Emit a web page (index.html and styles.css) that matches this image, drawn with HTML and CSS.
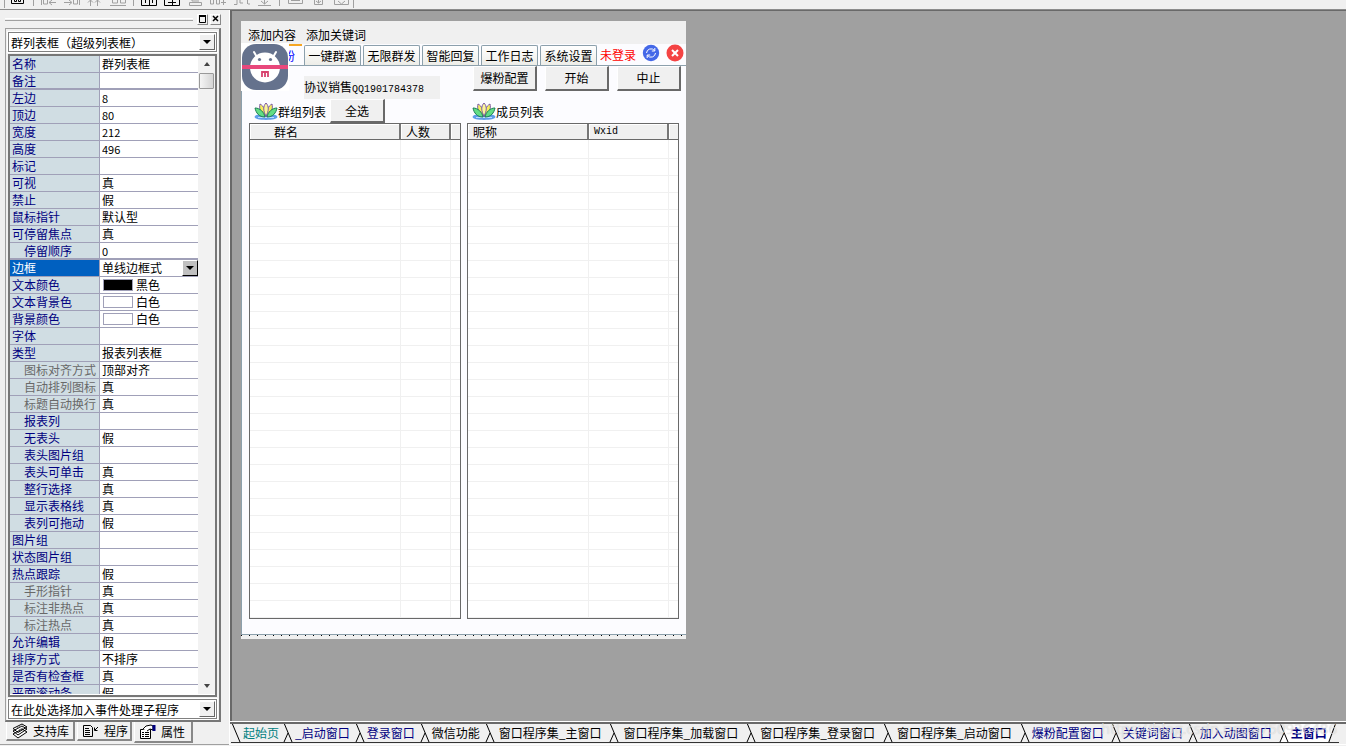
FILE: index.html
```html
<!DOCTYPE html>
<html lang="zh-CN">
<head>
<meta charset="utf-8">
<title>主窗口</title>
<link rel="stylesheet" href="styles.css">
</head>
<body>
<svg class="defs" aria-hidden="true">
  <symbol id="lotus" viewBox="0 0 24 18">
    <path d="M1 14c2-3 20-3 22 0s-4 4-11 4-13-1-11-4z" fill="#5f9ee8"/>
    <path d="M4 15.500h16" stroke="#b9dcff" stroke-width="1"/>
    <path d="M11 15C6 11 5 6 6 2c4 2 6 7 5 13z" fill="#f5ef5a" stroke="#7b5aa6"/>
    <path d="M13 15c5-4 6-9 5-13-4 2-6 7-5 13z" fill="#f5ef5a" stroke="#7b5aa6"/>
    <path d="M12 14C9 9 9 4 12 1c3 3 3 8 0 13z" fill="#fbf59a" stroke="#7b5aa6"/>
    <path d="M11 15C5 15 2 11 1 6c5 0 9 4 10 9z" fill="#62dd84" stroke="#1d7d56"/>
    <path d="M13 15c6 0 9-4 10-9-5 0-9 4-10 9z" fill="#62dd84" stroke="#1d7d56"/>
  </symbol>
  <symbol id="slash" viewBox="0 0 11 20">
    <path d="M1 0l8 19M1 19l4-9" fill="none" stroke="#000"/>
  </symbol>
  <symbol id="slash-first" viewBox="0 0 11 20">
    <path d="M1 0l8 19" fill="none" stroke="#000"/>
  </symbol>
</svg>

<header class="toolbar">
  <svg width="360" height="9" viewBox="0 -1 360 9" fill="none" aria-label="工具栏">
    <path d="M4.500 -1v8M33.500 -1v6M133.500 -1v6M279.500 -1v6M353.500 -1v8" stroke="#a0a0a0"/>
    <path d="M11.500 -1v3.500h12V-1M14.500 -1v1.500h2V-1M18.500 -1v1.500h2V-1" stroke="#000"/>
    <g stroke="#a0a0a0">
      <path d="M41.500 -1v5M43.500 -1v4h4V-1M49 1.500h7M52 -1l-3 2.500 3 2.500M64 1.500h7M69 -1l3 2.500-3 2.500M73.500 -1v4h4V-1M79.500 -1v5"/>
      <path d="M90.500 -1v6M97.500 -1v6M88 1.500l2.500-2.500 2.500 2.500M95 1.500l2.500-2.500 2.500 2.500M110 4.500h16M112.500 -1v3h5V-1M120.500 -1v3h5V-1"/>
      <path d="M192 -1v1h7M189.500 1.500h12v3h-12zM210.500 -1v4h3V-1M216.500 -1v4h3V-1M223.500 -1v5M221 1.500h5M234 3.500h3V-1M240 -1v3h3M247.500 -1v4M250 3h-2M258 4.500h13M264.500 -1v4M261 0l3.500 3 3.500-3"/>
      <path d="M288.500 -1v3.500h14V-1M291 -.5h9M314.500 -1v4.500h8V-1M318.500 -1v3M316 0l2.500 2 2.500-2M334.500 -1v4.500h14V-1M338 0l3.500 3 3.500-3"/>
    </g>
    <path d="M141.500 -1v5.500h15V-1M145.500 2V-1M149.500 4V-1M152.500 2V-1M164.500 -1v5.500h15V-1M168 1.500h8M172.500 -1v5" stroke="#000"/>
  </svg>
</header>

<main class="shell">
  <aside class="dock">
    <div class="dock-title">
      <span class="grip"></span>
      <button aria-label="还原"><svg width="8" height="8"><path d="M.5 0v7.500h6V1H0" fill="none" stroke="#000"/><path d="M0 1h7" stroke="#000" stroke-width="2"/></svg></button>
      <button aria-label="关闭"><svg width="8" height="8"><path d="M1 1l5 5M6 1l-5 5" fill="none" stroke="#000" stroke-width="1.500"/></svg></button>
    </div>
    <section class="panel">
      <div class="combo">
        <select aria-label="组件"><option>群列表框（超级列表框）</option></select>
        <span class="arrow"></span>
      </div>
      <div class="props">
        <div class="props-view"><table class="prop-table"><tbody id="props"></tbody></table></div>
        <div class="scroll">
          <button aria-label="向上滚动" class="up"></button>
          <span class="thumb"></span>
          <button aria-label="向下滚动" class="down"></button>
        </div>
      </div>
      <div class="combo">
        <select aria-label="事件处理"><option>在此处选择加入事件处理子程序</option></select>
        <span class="arrow"></span>
      </div>
    </section>
    <nav class="dock-tabs">
      <button>
        <svg width="18" height="16" fill="#fff" stroke="#000"><path d="M2 11l5 4 9-6-5-3zM2 8l5 4 9-6-5-3zM2 5.500l5 4L16 4l-5-3z"/><path d="M6 5l4-2M8 7l4-2" stroke="#777"/></svg>支持库</button>
      <button>
        <svg width="18" height="14" fill="none" stroke="#000"><path d="M1.500 1.500h7l2 2v9h-9zM3 4.500h4M3 6.500h5M3 8.500h5M3 10.500h5M16 3l-3 3M12.500 3.500v3h3"/></svg>程序</button>
      <button class="on">
        <svg width="18" height="16" fill="#fff" stroke="#000"><path d="M1.500 5.500h10v9h-10z"/><path d="M3 8.500h2M6 8.500h4M3 10.500h2M6 10.500h4M3 12.500h2M6 12.500h4"/><path d="M4 5l3-3 5-1 2 1v4l-3-1-3 2"/><path d="M15 1v6" stroke="#000080" stroke-width="3"/></svg>属性</button>
    </nav>
  </aside>

  <section class="work">
    <div class="canvas">
      <section class="form">
        <nav class="menu"><a href="#">添加内容</a><a href="#">添加关键词</a></nav>
        <div class="strip">
          <button class="tab current">粉</button>
          <button class="tab">一键群邀</button>
          <button class="tab">无限群发</button>
          <button class="tab">智能回复</button>
          <button class="tab">工作日志</button>
          <button class="tab">系统设置</button>
          <span class="login">未登录</span>
          <button class="round" aria-label="刷新"><svg width="18" height="18" viewBox="0 0 18 18"><circle cx="9" cy="9" r="8.200" fill="#4468e8"/><path d="M4.500 9a4.500 4.500 0 0 1 8-2.500M13.500 9a4.500 4.500 0 0 1-8 2.500M12.800 4v3h-3M5.200 14v-3h3" fill="none" stroke="#fff"/></svg></button>
          <button class="round" aria-label="关闭窗口"><svg width="18" height="18" viewBox="0 0 18 18"><circle cx="9" cy="9" r="8.500" fill="#f44343"/><path d="M6 6l6 6M12 6l-6 6" stroke="#fff" stroke-width="2"/></svg></button>
        </div>
        <svg class="logo" width="48" height="48" viewBox="0 0 48 48" role="img" aria-label="标志">
          <path d="M0 0h48v48H0z" fill="#fff"/>
          <rect x="1" y="1" width="46" height="46" rx="14" fill="#65728d"/>
          <path d="M13 9l4 7M35 9l-4 7" stroke="#fff" stroke-width="2" stroke-linecap="round"/>
          <circle cx="24" cy="24.500" r="15" fill="#fff"/>
          <circle cx="18.500" cy="16.500" r="1.600" fill="#65728d"/><circle cx="29.500" cy="16.500" r="1.600" fill="#65728d"/>
          <path d="M1 22h46v4H1z" fill="#e8487c"/>
          <path d="M21 34v-5h6v5M24 29v5" fill="none" stroke="#d8436f" stroke-width="1.800"/>
        </svg>
        <div class="body">
          <div class="actions">
            <span class="seller">协议销售<span class="mono">QQ1901784378</span></span>
            <div class="buttons"><button class="btn">爆粉配置</button><button class="btn">开始</button><button class="btn">中止</button></div>
          </div>
          <div class="lists">
            <section class="list">
              <div class="caption"><svg width="24" height="18"><use href="#lotus"/></svg><span>群组列表</span><button class="btn pick">全选</button></div>
              <div class="box"><table class="report groups">
                <colgroup><col><col class="c-count"><col class="c-end"></colgroup>
                <thead><tr><th>群名</th><th>人数</th><th></th></tr></thead><tbody></tbody>
              </table></div>
            </section>
            <section class="list">
              <div class="caption"><svg width="24" height="18"><use href="#lotus"/></svg><span>成员列表</span></div>
              <div class="box"><table class="report members">
                <colgroup><col><col class="c-wxid"><col class="c-end"></colgroup>
                <thead><tr><th>昵称</th><th class="mono">Wxid</th><th></th></tr></thead><tbody></tbody>
              </table></div>
            </section>
          </div>
        </div>
        <div class="dots"></div>
      </section>
    </div>
    <nav class="sheets">
      <button class="teal"><svg><use href="#slash-first"/></svg>起始页</button>
      <button class="navy"><svg><use href="#slash"/></svg>_启动窗口</button>
      <button class="navy"><svg><use href="#slash"/></svg>登录窗口</button>
      <button><svg><use href="#slash"/></svg>微信功能</button>
      <button class="wide"><svg><use href="#slash"/></svg>窗口程序集_主窗口</button>
      <button class="wide"><svg><use href="#slash"/></svg>窗口程序集_加载窗口</button>
      <button class="wide"><svg><use href="#slash"/></svg>窗口程序集_登录窗口</button>
      <button class="wide"><svg><use href="#slash"/></svg>窗口程序集_启动窗口</button>
      <button class="navy mid"><svg><use href="#slash"/></svg>爆粉配置窗口</button>
      <button class="navy"><svg><use href="#slash"/></svg>关键词窗口</button>
      <button class="navy mid"><svg><use href="#slash"/></svg>加入动图窗口</button>
      <button class="navy active"><svg><use href="#slash"/></svg>主窗口</button>
    </nav>
    <span class="mark">https://blog.csdn.net/a750936486</span>
  </section>
</main>
<script src="script.js"></script>
</body>
</html>
```
FILE: styles.css
```css
* { box-sizing: border-box; }
body {
  margin: 0;
  height: 100vh;
  display: flex;
  flex-direction: column;
  overflow: hidden;
  background: #f0f0f0;
  color: #000;
  font: 12px/16px "Noto Sans CJK SC", sans-serif;
}
button, select, input { font: inherit; color: inherit; margin: 0; padding: 0; border: 0; background: none; border-radius: 0; }
button { white-space: nowrap; }
svg { flex: none; display: block; }
.defs { display: none; }
.mono { font-family: "Liberation Mono", monospace; font-size: 10px; }

.toolbar { height: 10px; flex: none; border-bottom: 1px solid #8c8c8c; }
.shell { flex: 1; min-height: 0; display: flex; border-bottom: 1px solid #a0a0a0; margin-bottom: 1px; }

/* property dock */
.dock { width: 230px; flex: none; display: flex; flex-direction: column; padding: 0 8px 1px 5px; border-right: 1px solid #fff; }
.dock-title { display: flex; align-items: center; flex: none; height: 18px; gap: 2px; }
.dock-title button { width: 11px; height: 11px; display: grid; place-items: center; border: 1px solid #fff; border-right-color: #888; border-bottom-color: #888; }
.grip { flex: 1; height: 3px; margin-right: 2px; border-top: 1px solid #fff; border-bottom: 1px solid #a0a0a0; }
.panel {
  flex: 1; min-height: 0; display: flex; flex-direction: column; gap: 2px; padding: 3px 2px 1px;
  border: 1px solid #a0a0a0; border-right: 2px solid #777; border-bottom: 2px solid #777;
}
.combo { height: 20px; flex: none; display: flex; position: relative; border: 1px solid #808080; outline: 1px solid #fff; background: #fff; }
.combo select { appearance: none; width: 100%; padding-left: 2px; line-height: 17px; }
.arrow { position: absolute; right: 1px; top: 1px; width: 16px; height: 16px; background: #f0f0f0; border: 1px solid #fff; border-right-color: #666; border-bottom-color: #666; pointer-events: none; }
.arrow::after { content: ""; position: absolute; left: 3px; top: 5px; border: 4px solid transparent; border-top-color: #000; border-bottom: 0; }
.props { flex: 1; min-height: 0; display: flex; border: 2px solid #777; background: #fff; padding-bottom: 1px; }
.props-view { flex: 1; min-width: 0; overflow: hidden; }
.prop-table { width: 100%; table-layout: fixed; border-collapse: separate; border-spacing: 0; }
.prop-table th, .prop-table td { height: 17px; padding: 0 0 0 2px; border-bottom: 1px solid #a0a0b8; font-weight: normal; text-align: left; white-space: nowrap; overflow: hidden; }
.prop-table th { width: 90px; background: #d0dde3; border-right: 1px solid #a0a0b8; color: #000080; }
.prop-table label { display: block; height: 16px; }
.prop-table input, .prop-table select { display: block; width: 100%; height: 16px; appearance: none; line-height: 16px; outline: 0; }
.prop-table td { position: relative; }
.prop-table .sub { padding-left: 14px; }
.prop-table .off { color: #696969; }
.prop-table .num { font-size: 11px; }
.prop-table .group > * { border-bottom-width: 2px; }
.prop-table .group label, .prop-table .group input { height: 15px; }
.prop-table .picked th { background: #0060c0; color: #fff; }
.prop-table .arrow { right: 0; top: 0; background: #c0c0c0; border-right-color: #000; border-bottom-color: #000; }
.swatch { display: flex; gap: 3px; align-items: center; }
.swatch i { flex: none; width: 30px; height: 12px; margin-left: 1px; border: 1px solid #a0a0b8; background: #fff; }
.swatch i.black { background: #000; }
.scroll { width: 17px; display: flex; flex-direction: column; align-items: center; background: #f2f2f2; }
.scroll button { width: 16px; height: 16px; display: grid; place-items: center; }
.scroll button::after { content: ""; border: 3px solid transparent; }
.scroll .up::after { border-bottom: 4px solid #444; border-top: 0; }
.scroll .down::after { border-top: 4px solid #444; border-bottom: 0; }
.thumb { width: 15px; height: 16px; margin: 1px 0 auto; border: 1px solid #999; border-radius: 1px; background: linear-gradient(90deg, #f5f5f5, #d4d4d4); }
.dock-tabs { display: flex; flex: none; height: 21px; padding-left: 1px; gap: 2px; align-items: flex-start; }
.dock-tabs button { height: 19px; display: flex; align-items: center; gap: 4px; padding: 0 4px; border: 1px solid #fff; border-top: 0; border-right: 2px solid #888; border-bottom: 2px solid #888; }
.dock-tabs button:nth-child(2) { padding: 0 2px 0 4px; }
.dock-tabs .on { height: 21px; padding: 0 6px 0 4px; }

/* work area */
.work { flex: 1; min-width: 0; display: flex; flex-direction: column; position: relative; }
.canvas { flex: 1; min-height: 0; background: #a0a0a0; border: solid #696969; border-width: 1px 0 0 2px; padding: 10px 0 0 9px; overflow: hidden; }
.form { position: relative; width: 445px; background: #f0f0f0; }
.menu { display: flex; gap: 10px; height: 23px; padding: 6px 7px 0; }
.menu a { color: #000; text-decoration: none; }
.strip { display: flex; align-items: flex-end; gap: 2px; height: 22px; padding-left: 1px; background: #fcfcff; border-bottom: 1px solid #8ca0ac; }
.strip > * { flex: none; }
.tab { height: 20px; width: 57px; border: 1px solid #8ca0ac; border-bottom: 0; border-radius: 2px 2px 0 0; background: linear-gradient(#fff, #edede8); }
.current { width: 60px; height: 21px; padding-right: 7px; border: 0; border-top: 2px solid #f5a623; border-radius: 0; background: #fcfcff; color: #00f; text-align: right; }
.login { height: 18px; padding-left: 1px; margin-right: 4px; color: #f00; line-height: 16px; white-space: nowrap; }
.round { height: 18px; align-self: flex-start; margin-right: 4px; }
.logo { position: absolute; left: 0; top: 22px; }
.body { background: #fcfcff; border-left: 1px solid #8ca0ac; border-bottom: 1px solid #8ca0ac; padding: 0 7px 15px; }
.actions { display: flex; justify-content: space-between; height: 33px; }
.seller { width: 136px; height: 23px; margin: 10px 0 0 55px; line-height: 22px; background: #f0f0f0; }
.buttons { display: flex; gap: 8px; margin-right: -2px; }
.btn { width: 64px; height: 25px; background: #f0f0f0; border: 1px solid #fff; border-right: 2px solid #696969; border-bottom: 2px solid #696969; }
.lists { display: grid; grid-template-columns: 1fr 1fr; gap: 6px; }
.caption { height: 24px; display: flex; align-items: center; padding-left: 5px; }
.caption span { line-height: 23px; }
.pick { width: 55px; height: 24px; margin-left: 4px; }
.box { border: 1px solid #696969; background: #fff; }
.report { width: 100%; table-layout: fixed; border-collapse: separate; border-spacing: 0; }
.report th { height: 16px; padding: 0 0 0 5px; font-weight: normal; text-align: left; line-height: 14px; background: #f0f0f0; border-right: 2px solid #777; border-bottom: 1px solid #696969; box-shadow: inset 1px 1px #fff; }
.report th:last-child, .report td:last-child { border-right: 0; }
.report th.mono { font-size: 10px; vertical-align: bottom; }
.report td { height: 17px; padding: 0; border-right: 1px solid #f0f0f0; border-bottom: 1px solid #f0f0f0; }
.report tbody tr:first-child td { height: 19px; }
.groups th:first-child { padding-left: 24px; }
.c-count { width: 50px; }
.c-wxid { width: 80px; }
.c-end { width: 9px; }
.dots { height: 4px; background: repeating-linear-gradient(90deg, #000 0 1px, transparent 1px 8px) 0 0 / 100% 1px no-repeat; }

/* sheet tabs */
.sheets { flex: none; height: 22px; display: flex; padding: 0 0 1px 1px; border-top: 2px solid #696969; outline: 1px solid #fff; position: relative; background: #f0f0f0; overflow: hidden; }
.sheets button { height: 19px; display: flex; align-items: center; padding-right: 5px; border-bottom: 1px solid #333; }
.sheets svg { width: 11px; height: 20px; margin-right: 1px; }
.sheets .wide { padding-right: 8px; }
.sheets .wide svg { margin-right: 3px; }
.sheets .mid { padding-right: 7px; }
.sheets .teal { color: #008080; padding-right: 4px; }
.sheets .navy { color: #000080; }
.sheets .active { padding-right: 12px; font-weight: bold; background: linear-gradient(110deg, #f0f0f0 7px, #fff 8px 52px, #000 53px, #f0f0f0 54px); }
.mark { position: absolute; right: 9px; bottom: 4px; font: 15px/24px "Open Sans", sans-serif; color: rgba(255, 255, 255, 0.55); text-shadow: 0 0 1px rgba(120, 120, 120, 0.4); pointer-events: none; }
```
FILE: script.js
```js
// name, value, flags: s = indented, o = unavailable, g = end of group, p = selected, b/w = colour swatch
const rows = [
  ["名称", "群列表框"], ["备注", "", "g"], ["左边", "8"], ["顶边", "80"], ["宽度", "212"], ["高度", "496"],
  ["标记", ""], ["可视", "真"], ["禁止", "假"], ["鼠标指针", "默认型"], ["可停留焦点", "真"], ["停留顺序", "0", "sg"],
  ["边框", "单线边框式", "p"], ["文本颜色", "黑色", "b"], ["文本背景色", "白色", "w"], ["背景颜色", "白色", "w"],
  ["字体", ""], ["类型", "报表列表框"], ["图标对齐方式", "顶部对齐", "so"], ["自动排列图标", "真", "so"],
  ["标题自动换行", "真", "so"], ["报表列", "", "s"], ["无表头", "假", "s"], ["表头图片组", "", "s"],
  ["表头可单击", "真", "s"], ["整行选择", "真", "s"], ["显示表格线", "真", "s"], ["表列可拖动", "假", "s"],
  ["图片组", ""], ["状态图片组", ""], ["热点跟踪", "假"], ["手形指针", "真", "so"], ["标注非热点", "真", "so"],
  ["标注热点", "真", "so"], ["允许编辑", "假"], ["排序方式", "不排序"], ["是否有检查框", "真"], ["平面滚动条", "假"]
];
document.getElementById("props").innerHTML = rows.map(([name, value, flags = ""], i) => {
  const has = f => flags.includes(f);
  const rowClass = has("g") ? "group" : has("p") ? "picked" : "";
  const headClass = (has("s") ? "sub " : "") + (has("o") ? "off" : "");
  const num = /^\d+$/.test(value) ? "num" : "";
  let field = `<input id="p${i}" class="${num}" value="${value}">`;
  if (has("p")) field = `<select id="p${i}"><option>${value}</option></select><span class="arrow"></span>`;
  if (has("b") || has("w")) field = `<div class="swatch"><i class="${has("b") ? "black" : ""}"></i>${field}</div>`;
  return `<tr class="${rowClass}"><th class="${headClass}"><label for="p${i}">${name}</label></th><td>${field}</td></tr>`;
}).join("");

document.querySelectorAll(".report tbody").forEach(body => {
  body.innerHTML = "<tr><td></td><td></td><td></td></tr>".repeat(28);
});
```
